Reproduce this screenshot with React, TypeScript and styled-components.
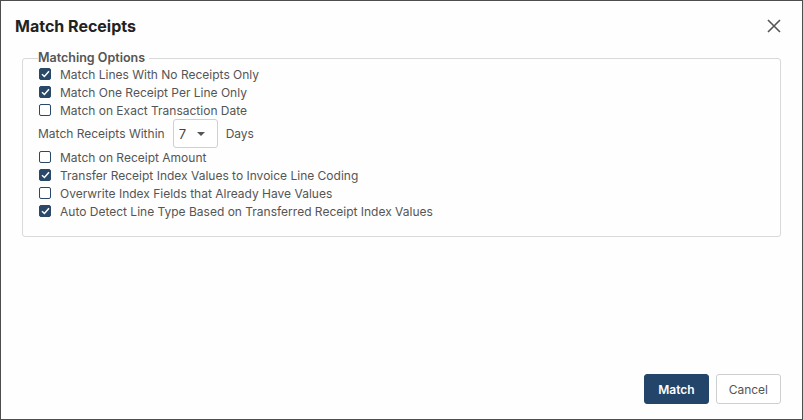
import { useState } from "react";
import styled, { createGlobalStyle } from "styled-components";

const GlobalStyle = createGlobalStyle`
	* { box-sizing: border-box; }
	body {
		margin: 0;
		font-family: Inter, "Noto Sans", sans-serif;
		background: #ffffff;
	}
`;

const Dialog = styled.div`
	width: 803px;
	height: 420px;
	border: 1px solid #4d4d4d;
	background: #fefefe;
	display: flex;
	flex-direction: column;
	padding: 0 21px 15px 21px;
`;

const Header = styled.div`
	display: flex;
	align-items: center;
	justify-content: space-between;
	height: 50px;
	margin-left: -7px;
`;

const Title = styled.h2`
	margin: 0;
	font-size: 16px;
	font-weight: 700;
	color: #222;
`;

const CloseButton = styled.button`
	background: none;
	border: none;
	padding: 0;
	display: flex;
	cursor: pointer;
`;

const Fieldset = styled.fieldset`
	margin: 0;
	border: 1px solid #d9d9d9;
	border-radius: 3px;
	padding: 0 14px 16px 15px;
	display: flex;
	flex-direction: column;
`;

const Legend = styled.legend`
	padding: 0 4px 0 0;
	font-size: 12.5px;
	font-weight: 600;
	color: #555;
	line-height: 14px;
`;

const Row = styled.label`
	display: flex;
	align-items: center;
	height: 18px;
	gap: 9px;
	padding-left: 1px;
	font-size: 12px;
	color: #555;
	cursor: pointer;
`;

const Box = styled.span<{ $checked: boolean }>`
	width: 12px;
	height: 12px;
	border-radius: 2px;
	border: 1.5px solid #2a4868;
	background: ${({ $checked }) => ($checked ? "#2a4868" : "#fff")};
	display: flex;
	align-items: center;
	justify-content: center;
	flex-shrink: 0;
`;

const WithinRow = styled.div`
	display: flex;
	align-items: center;
	gap: 8px;
	height: 29px;
	font-size: 12px;
	color: #555;
`;

const Select = styled.div`
	width: 45px;
	height: 29px;
	border: 1px solid #d0d0d0;
	border-radius: 3px;
	display: flex;
	align-items: center;
	justify-content: space-between;
	padding: 0 12px 0 5px;
	font-size: 13px;
	color: #444;
	background: #fff;
`;

const Spacer = styled.div`
	flex: 1;
`;

const Footer = styled.div`
	display: flex;
	justify-content: flex-end;
	gap: 7px;
`;

const Button = styled.button<{ $primary?: boolean }>`
	height: 30px;
	border-radius: 3px;
	font-family: inherit;
	font-size: 12px;
	font-weight: ${({ $primary }) => ($primary ? 600 : 400)};
	padding: 0 ${({ $primary }) => ($primary ? 13 : 12)}px;
	border: 1px solid ${({ $primary }) => ($primary ? "#23456a" : "#cfcfcf")};
	background: ${({ $primary }) => ($primary ? "#23456a" : "#fff")};
	color: ${({ $primary }) => ($primary ? "#fff" : "#555")};
	cursor: pointer;
`;

const Check = () => (
	<svg width="9" height="8" viewBox="0 0 9 8">
		<path d="M 1 4.2 L 3.4 6.5 L 8 1.2" fill="none" stroke="#fff" strokeWidth="1.5" />
	</svg>
);

const Option: React.FC<{ label: string; checked: boolean; onToggle: () => void }> = ({ label, checked, onToggle }) => (
	<Row onClick={onToggle}>
		<Box $checked={checked}>{checked && <Check />}</Box>
		{label}
	</Row>
);

const topOptions = [
	{ label: "Match Lines With No Receipts Only", checked: true },
	{ label: "Match One Receipt Per Line Only", checked: true },
	{ label: "Match on Exact Transaction Date", checked: false },
];

const bottomOptions = [
	{ label: "Match on Receipt Amount", checked: false },
	{ label: "Transfer Receipt Index Values to Invoice Line Coding", checked: true },
	{ label: "Overwrite Index Fields that Already Have Values", checked: false },
	{ label: "Auto Detect Line Type Based on Transferred Receipt Index Values", checked: true },
];

export default function App() {
	const [top, setTop] = useState(topOptions.map((o) => o.checked));
	const [bottom, setBottom] = useState(bottomOptions.map((o) => o.checked));

	return (
		<>
			<GlobalStyle />
			<Dialog>
				<Header>
					<Title>Match Receipts</Title>
					<CloseButton>
						<svg width="14" height="14" viewBox="0 0 14 14">
							<path d="M 1 1 L 13 13 M 13 1 L 1 13" stroke="#555" strokeWidth="1.6" />
						</svg>
					</CloseButton>
				</Header>
				<Fieldset>
					<Legend>Matching Options</Legend>
					{topOptions.map((o, i) => (
						<Option
							key={o.label}
							label={o.label}
							checked={top[i]}
							onToggle={() => setTop(top.map((v, j) => (j === i ? !v : v)))}
						/>
					))}
					<WithinRow>
						Match Receipts Within
						<Select>
							7
							<svg width="8" height="4" viewBox="0 0 8 4">
								<path d="M 0 0 L 8 0 L 4 4 Z" fill="#555" />
							</svg>
						</Select>
						Days
					</WithinRow>
					{bottomOptions.map((o, i) => (
						<Option
							key={o.label}
							label={o.label}
							checked={bottom[i]}
							onToggle={() => setBottom(bottom.map((v, j) => (j === i ? !v : v)))}
						/>
					))}
				</Fieldset>
				<Spacer />
				<Footer>
					<Button $primary>Match</Button>
					<Button>Cancel</Button>
				</Footer>
			</Dialog>
		</>
	);
}
